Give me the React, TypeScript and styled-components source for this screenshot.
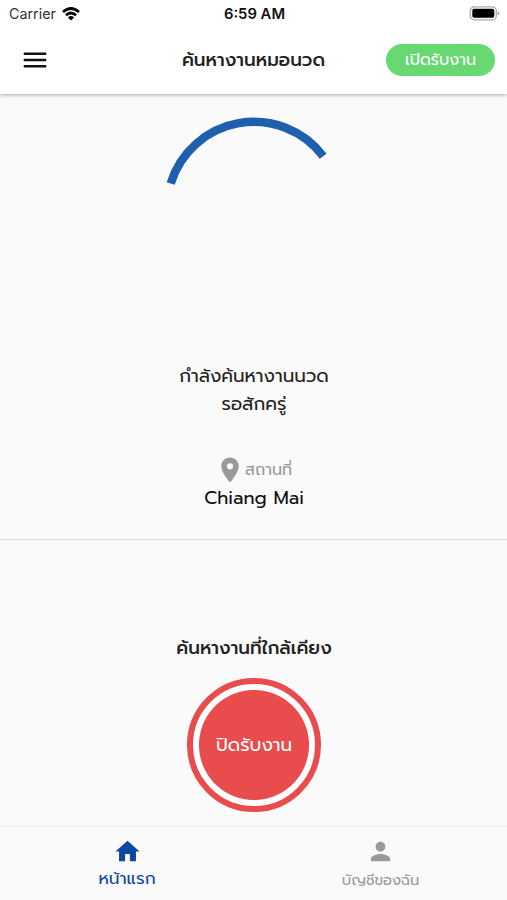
import React from "react";
import styled, { createGlobalStyle } from "styled-components";
import { MdHome, MdMenu, MdPerson, MdLocationOn } from "react-icons/md";

const GlobalStyle = createGlobalStyle`
  * { box-sizing: border-box; }
  body { margin: 0; background: #fafafa; }
  button { font: inherit; border: 0; padding: 0; }
`;

const Screen = styled.div`
  width: 507px;
  height: 900px;
  display: flex;
  flex-direction: column;
  overflow: hidden;
  background: #fafafa;
  color: #222;
  font-family: Prompt, "Noto Sans Thai", "Noto Sans", sans-serif;
`;

const Header = styled.header`
  flex: none;
  height: 94px;
  background: #fff;
  box-shadow: 0 1px 4px rgba(0, 0, 0, 0.32);
`;

const StatusBar = styled.div`
  height: 27px;
  padding: 0 7px 0 9px;
  display: grid;
  grid-template-columns: 1fr auto 1fr;
  align-items: center;
  font-family: Inter, sans-serif;
  font-size: 14.3px;
  color: #333;
`;

const Carrier = styled.div`
  display: flex;
  align-items: center;
  gap: 6px;
`;

const Clock = styled.div`
  font-weight: 600;
  font-size: 14.8px;
  color: #111;
`;

const Battery = styled.svg`
  justify-self: end;
`;

const AppBar = styled.div`
  height: 65px;
  padding: 0 12px 0 20px;
  display: grid;
  grid-template-columns: 109px 1fr 109px;
  align-items: center;
  justify-items: center;
`;

const MenuButton = styled.button`
  justify-self: start;
  width: 30px;
  height: 30px;
  background: none;
  color: #111;
`;

const Label = styled.span<{ $size: number; $weight?: number; $color?: string }>`
  display: block;
  white-space: nowrap;
  line-height: 28px;
  font-size: ${(p) => p.$size}px;
  font-weight: ${(p) => p.$weight ?? 400};
  color: ${(p) => p.$color ?? "#222"};
`;

const Title = styled(Label)`
  margin-right: 8px;
`;

const StatusPill = styled.button`
  width: 109px;
  height: 32px;
  border-radius: 16px;
  background: #68d872;
  display: flex;
  align-items: center;
  justify-content: center;
`;

const Searching = styled.section`
  flex: none;
  height: 446px;
  padding: 24px 0 0 1px;
  display: flex;
  flex-direction: column;
  align-items: center;
  border-bottom: 1px solid #dedede;
`;

const Spinner = styled.svg`
  overflow: visible;
`;

const Message = styled.div`
  margin-top: 62px;
  text-align: center;
`;

const Place = styled.div`
  margin-top: 38px;
  display: flex;
  flex-direction: column;
  align-items: center;
`;

const PlaceHeading = styled.div`
  height: 28px;
  margin-right: 1px;
  display: flex;
  align-items: center;
  color: #999;
`;

const Nearby = styled.section`
  flex: 1;
  padding: 94px 0 0 1px;
  display: flex;
  flex-direction: column;
  align-items: center;
`;

const StopButton = styled.button`
  margin-top: 16px;
  width: 134px;
  height: 134px;
  border-radius: 50%;
  border: 6px solid #e84c4c;
  background: radial-gradient(circle, #e84c4c 54.5px, #fff 55.5px);
  display: flex;
  align-items: center;
  justify-content: center;
`;

const TabBar = styled.nav`
  flex: none;
  height: 74px;
  border-top: 1px solid #eee;
  display: grid;
  grid-template-columns: 254px 253px;
`;

const Tab = styled.a<{ $active?: boolean }>`
  padding-top: 10px;
  display: flex;
  flex-direction: column;
  align-items: center;
  color: ${(p) => (p.$active ? "#0d47a1" : "#999")};
`;

const TabLabel = styled(Label)<{ $lift: number }>`
  margin-top: ${(p) => -p.$lift}px;
`;

export default function App() {
  return (
    <>
      <GlobalStyle />
      <Screen>
        <Header>
          <StatusBar>
            <Carrier>
              Carrier
              <svg width="18" height="14" viewBox="0 0 18 14" fill="none" stroke="#000" strokeWidth="2.7">
                <path d="M1 5.1Q9-2.1 17 5.1" />
                <path d="M3.9 8.3Q9 3.7 14.1 8.3" />
                <path d="M9 13.4L5.9 10.4Q9 7.8 12.1 10.4Z" fill="#000" stroke="none" />
              </svg>
            </Carrier>
            <Clock>6:59 AM</Clock>
            <Battery width="31" height="15" viewBox="0 0 31 15">
              <rect x="1.3" y="0.8" width="26" height="13" rx="4" fill="#fff" stroke="#aaa" strokeWidth="1.3" />
              <rect x="3.3" y="2.8" width="22" height="9" rx="2" fill="#000" />
              <path d="M28.6 5v4.6q1.8-.7 1.8-2.3T28.6 5Z" fill="#aaa" />
            </Battery>
          </StatusBar>
          <AppBar>
            <MenuButton aria-label="เมนู">
              <MdMenu size={30} />
            </MenuButton>
            <Title $size={18.4} $weight={500}>ค้นหางานหมอนวด</Title>
            <StatusPill>
              <Label $size={16} $color="#fff">เปิดรับงาน</Label>
            </StatusPill>
          </AppBar>
        </Header>
        <Searching>
          <Spinner width="182" height="182" viewBox="0 0 182 182" fill="none">
            <path d="M7.7 65.5A87 87 0 0 1 160.2 38.2" stroke="#1e5fae" strokeWidth="8.4" />
          </Spinner>
          <Message>
            <Label $size={18.4}>กำลังค้นหางานนวด</Label>
            <Label $size={18.4}>รอสักครู่</Label>
          </Message>
          <Place>
            <PlaceHeading>
              <MdLocationOn size={30} />
              <Label $size={16} $color="#999">สถานที่</Label>
            </PlaceHeading>
            <Label $size={18.4} $color="#111">Chiang Mai</Label>
          </Place>
        </Searching>
        <Nearby>
          <Label $size={18.4} $weight={500}>ค้นหางานที่ใกล้เคียง</Label>
          <StopButton>
            <Label $size={18.4} $color="#fff">ปิดรับงาน</Label>
          </StopButton>
        </Nearby>
        <TabBar>
          <Tab $active>
            <MdHome size={29} />
            <TabLabel $lift={2} $size={17} $color="#0d47a1">หน้าแรก</TabLabel>
          </Tab>
          <Tab>
            <MdPerson size={29} />
            <TabLabel $lift={0} $size={14.7} $color="#999">บัญชีของฉัน</TabLabel>
          </Tab>
        </TabBar>
      </Screen>
    </>
  );
}
